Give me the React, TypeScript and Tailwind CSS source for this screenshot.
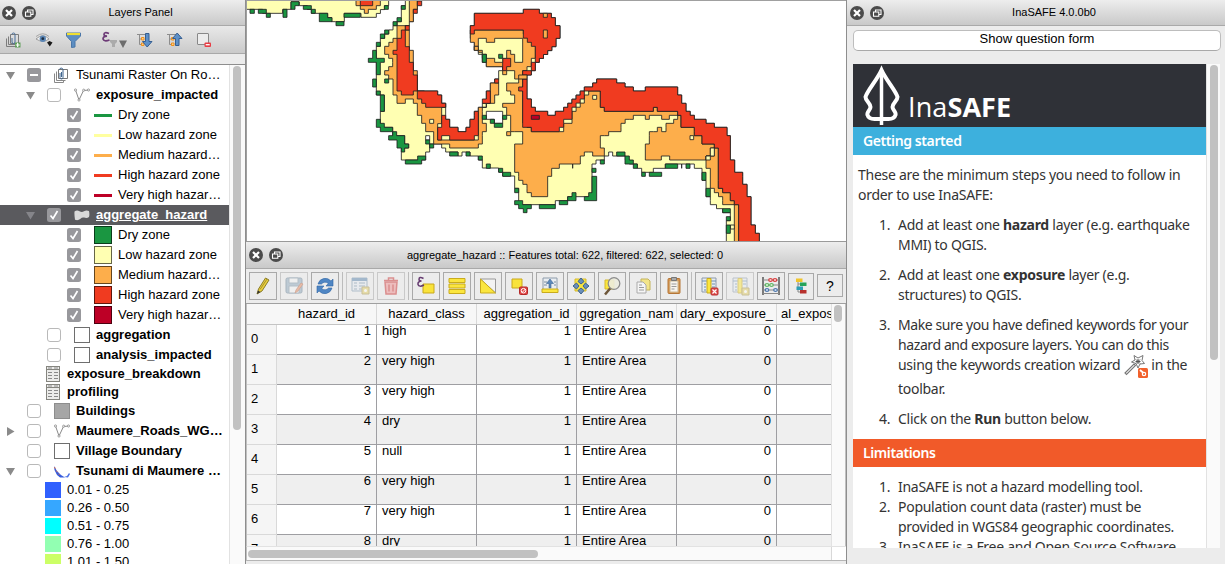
import React from "react";

const GREEN = "#1a9641";
const YELLOW = "#ffffb2";
const ORANGE = "#fdae4b";
const RED = "#f03b20";
const DARK = "#bd0026";

/* ---------- map ---------- */

const CELL = 12.15;

function stepped(src: string): string {
  const pts = src.trim().split(/\s+/).map((p) => p.split(",").map(Number));
  let d = "M" + pts[0][0] + " " + pts[0][1];
  for (let i = 0; i < pts.length; i++) {
    const [x0, y0] = pts[i];
    const [x1, y1] = pts[(i + 1) % pts.length];
    const n = Math.max(1, Math.round(Math.min(Math.abs(x1 - x0), Math.abs(y1 - y0)) / CELL));
    for (let k = 1; k <= n; k++) {
      d += "H" + (x0 + ((x1 - x0) * k) / n).toFixed(1) + "V" + (y0 + ((y1 - y0) * k) / n).toFixed(1);
    }
  }
  return d + "Z";
}

const LAND = [
  "0,-6 440,-6 428,6 428,17 391,52 345,52 345,40 295,40 295,65 269,65 245,40 208,40 184,17 160,6 135,6 135,28 110,28 110,40 65,40 50,28 0,28",
  "478,-6 514,-6 514,28 502,28 502,65 490,65 490,77 478,90 478,140 490,140 490,187 502,187 502,225 514,225 514,273 575,273 575,285 587,285 587,310 599,310 599,358 611,358 611,382 636,382 636,395 660,395 660,382 672,370 672,358 685,346 685,334 697,334 697,322 709,322 709,310 721,297 721,273 733,273 733,249 746,249 746,237 758,237 758,212 770,212 770,200 721,200 721,187 709,187 709,163 697,151 685,151 685,115 673,115 673,77 685,77 685,40 832,40 832,28 880,28 880,40 916,40 916,53 928,53 928,77 942,77 942,115 930,115 930,140 880,187 868,187 868,212 856,212 856,225 843,225 843,297 856,297 856,322 868,322 868,334 905,334 905,346 928,346 928,334 953,334 953,322 1015,261 1040,261 1040,249 1052,249 1052,237 1112,237 1112,249 1137,249 1137,261 1162,261 1162,273 1198,273 1198,261 1295,261 1295,285 1307,285 1307,310 1320,310 1320,334 1345,358 1380,358 1380,370 1405,370 1405,382 1443,382 1443,407 1453,407 1453,480 1466,480 1466,517 1490,529 1490,553 1503,553 1503,590 1515,590 1515,675 1528,675 1528,700 1540,700 1540,730 1441,730 1441,662 1453,662 1453,638 1430,626 1393,602 1393,590 1380,590 1380,541 1368,517 1368,505 1345,505 1345,492 1320,492 1307,505 1307,492 1258,492 1258,505 1222,517 1187,517 1187,505 1174,505 1174,492 1150,480 1138,468 1100,456 1088,468 1075,480 1050,492 1038,505 1038,590 990,590 965,602 928,614 830,614 818,602 818,565 806,565 806,528 794,528 770,516 758,504 733,504 709,492 709,480 697,468 684,468 672,456 648,456 648,468 636,456 599,456 599,444 587,444 587,432 563,432 551,432 551,456 539,456 539,480 466,480 466,444 488,444 488,432 476,407 452,407 440,395 440,382 415,382 403,370 403,334 415,334 415,285 403,285 391,260 391,139 403,115 441,77 466,53 466,17 478,17",
];

const ORANGES = [
  "330,-6 330,17 343,17 343,28 355,28 355,40 367,40 367,28 391,28 391,17 403,17 403,-6",
  "490,-6 514,-6 514,28 502,28 502,65 490,65",
  "453,77 490,77 478,90 514,273 599,322 575,420 697,407 697,322 721,310 733,310 733,249 758,249 758,285 746,297 746,310 733,310 709,334 709,370 721,370 721,395 709,407 709,432 697,432 697,444 611,444 611,432 563,432 563,395 539,395 539,370 527,370 527,346 514,346 514,310 502,310 502,297 478,297 478,310 453,310 453,285 441,285 441,237 428,237 428,225 416,225 416,212 428,212 428,200 440,187 440,175 428,175 428,163 416,163 416,139 441,115 453,102",
  "673,90 832,90 832,102 868,139 868,175 856,187 856,200 843,212 830,225 830,370 856,395 940,395 953,382 953,370 978,358 978,334 1015,297 1015,285 1028,273 1063,273 1063,322 1075,322 1075,334 1222,334 1222,322 1234,322 1234,334 1295,334 1295,358 1283,358 1283,370 1260,382 1260,395 1247,395 1247,382 1234,382 1234,395 1222,395 1210,407 1210,432 1198,432 1198,480 1246,480 1246,468 1271,468 1271,480 1380,480 1380,468 1393,468 1393,444 1405,444 1405,432 1368,432 1368,407 1345,395 1345,382 1305,382 1305,346 1270,346 1270,358 1247,358 1247,346 1210,346 1210,358 1198,358 1198,346 1162,346 1162,358 1150,358 1125,382 1125,395 1088,395 1088,407 1075,407 1063,420 1063,444 1075,444 1075,468 1040,468 1040,456 1028,456 1015,468 1003,480 1003,492 980,505 980,492 940,492 940,505 917,505 917,529 905,529 905,590 856,590 856,578 843,565 843,553 818,529 818,517 806,517 806,432 830,432 830,395 806,395 794,395 794,346 782,346 782,322 770,322 770,310 806,297 806,285 794,285 794,273 782,273 782,249 818,249 818,237 806,237 806,212 782,212 782,224 770,224 770,200 721,200 721,175 697,139 685,151 685,127 673,102",
  "1380,480 1380,505 1393,505 1393,565 1405,565 1405,578 1430,602 1430,614 1465,614 1465,730 1478,730 1478,614 1465,614 1465,602 1453,602 1453,578 1430,565 1417,541 1417,444 1405,444 1405,468 1393,468",
];

const REDS = [
  "343,-6 343,17 380,17 380,-6",
  "514,3 527,3 527,17 514,17",
  "502,28 514,28 514,40 502,40",
  "478,77 490,77 490,90 478,90",
  "466,90 478,90 478,140 490,140 490,187 502,187 502,225 514,225 514,273 502,273 502,285 466,285 466,273 453,273 453,163 441,163 441,151 453,151 453,115 466,102",
  "514,273 575,273 575,285 587,285 587,310 599,310 599,322 539,322 539,310 527,310 527,297 514,297",
  "587,346 599,346 599,358 611,358 611,382 636,382 636,395 660,395 660,382 672,382 672,358 685,346 685,334 697,334 697,407 685,407 685,420 611,420 611,407 587,407 587,420 575,420 575,382 587,382",
  "721,273 733,273 733,310 709,310 709,297 721,297",
  "746,237 758,237 758,249 746,249",
  "770,175 794,175 794,200 782,200 782,212 770,212",
  "685,40 832,40 832,28 880,28 880,40 916,40 916,53 928,53 928,77 942,77 942,115 930,115 930,140 880,187 868,187 868,212 856,212 856,225 830,225 830,212 843,212 856,200 856,187 868,175 868,139 856,127 832,102 832,90 685,90 685,102 673,102 673,77 685,77",
  "830,237 843,237 843,297 856,297 856,322 868,322 868,334 905,334 905,346 928,346 928,334 953,334 953,322 1015,261 1040,261 1040,249 1052,249 1052,237 1112,237 1112,249 1137,249 1137,261 1162,261 1162,273 1198,273 1198,261 1295,261 1295,285 1307,285 1307,310 1320,310 1320,334 1345,358 1380,358 1380,370 1405,370 1405,382 1443,382 1443,407 1453,407 1453,480 1466,480 1466,517 1490,529 1490,553 1503,553 1503,590 1515,590 1515,675 1528,675 1528,700 1540,700 1540,730 1478,730 1478,614 1465,614 1465,602 1453,602 1453,578 1430,565 1417,541 1417,444 1405,444 1405,432 1368,432 1368,407 1345,395 1345,382 1305,382 1305,346 1295,346 1295,334 1234,334 1234,322 1222,322 1222,334 1075,334 1075,322 1063,322 1063,273 1028,273 1015,285 1015,297 978,334 978,358 953,370 953,382 940,382 940,395 856,395 856,382 830,370 830,273 818,273 818,261 830,261",
];

const YELLOWS = [
  "697,115 721,115 721,127 746,127 746,115 830,115 830,187 806,187 806,163 794,163 794,151 782,151 782,175 770,175 770,187 746,187 746,175 721,175 721,163 709,163 709,151 697,151",
  "551,358 563,358 563,370 551,370",
  "1040,286 1052,286 1052,298 1040,298",
  "1332,407 1343,407 1343,419 1332,419",
  "1393,444 1405,444 1405,468 1393,468",
  "1380,468 1393,468 1393,480 1380,480",
  "1453,675 1465,675 1465,687 1453,687",
];

const EXTRA_ORANGE = [
  "892,40 904,40 904,52 892,52",
  "892,90 904,90 904,114 892,114",
  "782,395 794,395 794,407 782,407",
  "818,225 843,225 843,237 818,237",
  "685,139 697,139 697,151 685,151",
];

const HOLES = [
  "721,334 770,334 770,370 745,370 745,358 721,358",
  "539,407 551,407 551,420 539,420",
];

const GREENS = [
  "12,28 25,28 25,40 12,40",
  "37,28 61,28 61,40 37,40",
  "61,40 73,40 73,52 61,52",
  "111,28 123,28 123,52 111,52",
  "135,5 159,5 159,17 147,17 147,28 135,28",
  "172,17 196,17 196,28 172,28",
  "196,28 208,28 208,40 196,40",
  "220,40 245,40 245,53 258,53 258,65 220,65",
  "270,65 294,65 294,77 270,77",
  "294,40 343,40 343,52 294,52",
  "415,17 427,17 427,28 415,28",
  "466,17 478,17 478,28 466,28",
  "453,53 466,53 466,65 453,65",
  "441,65 453,65 453,77 441,77",
  "416,90 428,90 428,102 416,102",
  "403,102 416,102 416,115 403,115",
  "391,127 403,127 403,139 391,139",
  "380,151 391,151 391,175 415,175 415,187 403,187 403,224 391,224 391,187 367,187 367,175 380,175",
  "380,237 391,237 391,261 380,261",
  "416,237 428,237 428,249 416,249",
  "391,273 403,273 403,285 391,285",
  "403,285 415,285 415,334 403,334",
  "391,358 403,358 403,370 415,370 415,382 440,382 440,395 403,395 403,382 391,382",
  "440,395 452,395 452,407 476,407 476,432 488,432 488,444 476,444 476,456 466,456 466,444 453,444 453,420 428,420 428,407 440,407",
  "478,480 515,480 515,468 539,468 539,480 527,480 527,492 478,492",
  "539,420 551,420 551,432 539,432",
  "551,432 563,432 563,444 551,444",
  "611,456 636,456 636,468 611,468",
  "660,456 672,456 672,468 660,468",
  "697,468 709,468 709,480 697,480",
  "721,492 733,492 733,505 721,505",
  "758,505 770,505 770,517 758,517",
  "770,517 794,517 794,529 770,529",
  "806,565 818,565 818,578 806,578",
  "806,602 830,602 830,614 856,614 856,626 843,626 843,638 832,638 832,626 818,626 818,614 806,614",
  "880,614 928,614 928,626 880,626",
  "940,602 965,602 965,590 978,590 978,578 990,578 990,602 965,602 965,614 940,614",
  "1038,529 1052,529 1052,602 1015,602 1015,590 1028,590 1028,578 1038,578",
  "1038,505 1050,505 1050,517 1038,517",
  "1063,480 1075,480 1075,492 1063,492",
  "1112,456 1137,456 1137,468 1150,468 1150,480 1162,480 1162,492 1137,492 1137,468 1112,468",
  "1162,492 1174,492 1174,505 1162,505",
  "1187,517 1198,517 1198,529 1187,529",
  "1210,517 1247,517 1247,529 1210,529",
  "1258,492 1295,492 1295,505 1258,505",
  "1320,492 1332,492 1332,505 1320,505",
  "1368,517 1380,517 1380,541 1368,541",
  "1380,565 1393,565 1393,590 1380,590",
  "1430,626 1453,626 1453,638 1430,638",
  "1441,650 1453,650 1453,662 1441,662",
  "1441,675 1453,675 1453,700 1441,700",
  "709,163 721,163 721,187 709,187",
  "758,163 770,163 770,175 758,175",
  "709,346 721,346 721,358 709,358",
  "770,346 782,346 782,358 770,358",
  "733,358 745,358 745,370 770,370 770,382 745,382 745,370 733,370",
];

function Shapes({ list, fill }: { list: string[]; fill: string }) {
  return (
    <g fill={fill}>
      {list.map((s, i) => (
        <path key={i} d={stepped(s)} />
      ))}
    </g>
  );
}

function HazardMap() {
  return (
    <svg className="-ml-px block" width="600" height="240" viewBox="0 3 1800 720">
      <g stroke="#222" strokeWidth="3" strokeOpacity="0.85">
        <Shapes list={LAND} fill={YELLOW} />
        <Shapes list={ORANGES} fill={ORANGE} />
        <Shapes list={REDS} fill={RED} />
        <Shapes list={YELLOWS} fill={YELLOW} />
        <Shapes list={EXTRA_ORANGE} fill={ORANGE} />
        <Shapes list={HOLES} fill="#fff" />
        <Shapes list={GREENS} fill={GREEN} />
        <Shapes list={["856,346 880,346 880,358 856,358"]} fill={DARK} />
      </g>
    </svg>
  );
}

/* ---------- shared chrome ---------- */

function TitleBar({ title, className }: { title: string; className: string }) {
  return (
    <div className={"flex shrink-0 items-center border-b border-[#a9a9a9] bg-linear-to-b from-[#ededed] to-[#c9c9c9] text-black " + className}>
      <svg width="36" height="16" viewBox="0 0 36 16" className="shrink-0">
        <circle cx="8" cy="8" r="7" fill="#4b4b4b" />
        <path d="M5 5l6 6M11 5l-6 6" stroke="#fff" strokeWidth="2.2" />
        <circle cx="28" cy="8" r="7" fill="#4b4b4b" />
        <path d="M26.5 7V5h5.5v4.500h-2M24.500 7h5.300v4.300h-5.300z" stroke="#fff" strokeWidth="1.100" fill="none" />
      </svg>
      <span className="min-w-0 flex-1 text-center text-[11px] whitespace-nowrap">{title}</span>
    </div>
  );
}

/* ---------- layers panel ---------- */

function Check({ state }: { state: "on" | "off" | "mixed" }) {
  return (
    <svg width="14" height="14" viewBox="0 0 14 14" className="shrink-0">
      {state === "off" ? (
        <rect x="0.5" y="0.5" width="13" height="13" rx="2.500" fill="#fff" stroke="#b9b9b9" />
      ) : (
        <rect width="14" height="14" rx="2.500" fill="#98989c" />
      )}
      {state === "on" && <path d="M3.500 7.500l2.500 3 4.500-7.500" fill="none" stroke="#fff" strokeWidth="1.700" />}
      {state === "mixed" && <path d="M3 7h8" stroke="#fff" strokeWidth="2" />}
    </svg>
  );
}

function Arrow({ open, dim }: { open: boolean; dim?: boolean }) {
  return (
    <svg width="9" height="9" viewBox="0 0 9 9" className="shrink-0">
      <path d={open ? "M0 1h9L4.500 8.500z" : "M1 0v9l7.500-4.500z"} fill={dim ? "#85858a" : "#8a8a8a"} />
    </svg>
  );
}

function GroupIcon() {
  return (
    <svg width="15" height="16" viewBox="0 0 15 16" className="shrink-0" fill="none">
      <path d="M4.500 2.500h9v9h-9z" stroke="#777" fill="#fff" />
      <path d="M2.500 4.500v9h9M.500 6.500v9h9v-2" stroke="#888" />
      <path d="M6 6v4.500a1.500 1.500 0 003 0V2.500a1.800 1.800 0 00-3.500 0M7.500 5v5" stroke="#3f658f" />
    </svg>
  );
}

function LineIcon() {
  return (
    <svg width="16" height="14" viewBox="0 0 16 14" className="shrink-0" fill="none" stroke="#8a8a8a">
      <path d="M1.500 2L5 12 9.500 2.500 15 2" />
      <circle cx="1.500" cy="2" r="1.100" fill="#fff" strokeWidth=".8" />
      <circle cx="5" cy="12" r="1.100" fill="#fff" strokeWidth=".8" />
      <circle cx="9.700" cy="2.200" r="1.100" fill="#fff" strokeWidth=".8" />
      <circle cx="14.500" cy="2" r="1.100" fill="#fff" strokeWidth=".8" />
    </svg>
  );
}

function PolyIcon() {
  return (
    <svg width="16" height="11" viewBox="0 0 16 11" className="shrink-0">
      <path d="M.500 1.500Q3-.300 5.500 1.300 8 2.500 10 1.200 12.500-.200 15 1q.8 3.500 0 6-2 1.500-5 .500Q8 7 6.500 8.800 4 11 1 9.800.200 5 .500 1.500z" fill="#d9d9d9" />
    </svg>
  );
}

function TableIcon() {
  return (
    <svg width="14" height="16" viewBox="0 0 14 16" className="shrink-0">
      <rect x=".5" y=".5" width="13" height="15" fill="#ececea" stroke="#85857f" />
      <path d="M.500 3.500h13" stroke="#85857f" />
      <path d="M2 2h4M8 2h4M2 6.500h4M8 6.500h4M2 9.500h4M8 9.500h4M2 12.500h4M8 12.500h4" stroke="#8a8a8a" />
    </svg>
  );
}

function RasterIcon() {
  return (
    <svg width="16" height="14" viewBox="0 0 16 14" className="shrink-0">
      <path d="M0 2l3 5 4 4 4 2.500H6L3 11 .500 6z" fill="#365cdd" />
      <path d="M.500 3l2 4 3 4" stroke="#d06a50" fill="none" strokeDasharray="2 2" />
      <path d="M10 13l3-1 2-3 1 1-2 3.500z" fill="#4a70e6" />
    </svg>
  );
}

const CATS: { name: string; line: string; box: string }[] = [
  { name: "Dry zone", line: "bg-[#1a9641]", box: "bg-[#1a9641]" },
  { name: "Low hazard zone", line: "bg-[#ffffa0]", box: "bg-[#ffffb2]" },
  { name: "Medium hazard…", line: "bg-[#fdae4b]", box: "bg-[#fdae4b]" },
  { name: "High hazard zone", line: "bg-[#f03b20]", box: "bg-[#f03b20]" },
  { name: "Very high hazar…", line: "bg-[#bd0026]", box: "bg-[#bd0026]" },
];

const RAMP: { name: string; box: string }[] = [
  { name: "0.01 - 0.25", box: "bg-[#3060fe]" },
  { name: "0.26 - 0.50", box: "bg-[#36a7ff]" },
  { name: "0.51 - 0.75", box: "bg-[#00ffff]" },
  { name: "0.76 - 1.00", box: "bg-[#92ffb2]" },
  { name: "1.01 - 1.50", box: "bg-[#ccff66]" },
];

function Row({ children, className }: { children: React.ReactNode; className: string }) {
  return <div className={"flex shrink-0 items-center whitespace-nowrap " + className}>{children}</div>;
}

function LeftToolbar() {
  return (
    <div className="flex h-[28px] shrink-0 items-center border-b border-[#a9a9a9] bg-linear-to-b from-[#e9e9e9] to-[#cacaca] pl-[6px]">
      <svg width="15" height="16" viewBox="0 0 15 16" fill="none">
        <path d="M4.500 2.500h8v9h-8zM2.500 4.500v8h9M.500 6.500v8h9" stroke="#7d7d7d" />
        <path d="M6 6v4a1.500 1.500 0 003 0V2.500a1.500 1.500 0 00-3 0" stroke="#496f9a" />
        <path d="M9 10.500h5.500v5H9z" fill="#5f9f58" />
        <path d="M11.700 11v4M9.700 13h4" stroke="#fff" strokeWidth="1.200" />
      </svg>
      <svg className="ml-[14px]" width="18" height="16" viewBox="0 0 18 16">
        <path d="M1 7Q8 .500 14 7 8 11.500 1 7z" fill="#f4f4f4" stroke="#8b8b8b" strokeWidth=".8" />
        <path d="M1 4.500Q8-1 14 4.500" stroke="#a5a5a5" fill="none" />
        <circle cx="7.800" cy="6.700" r="3.200" fill="#5b86b5" />
        <circle cx="7.800" cy="6.700" r="1.400" fill="#1c2c40" />
        <path d="M12 10.500l2.500-1.500 3 1.500-2.700 4z" fill="#1a1a1a" />
      </svg>
      <svg className="ml-[13px]" width="15" height="16" viewBox="0 0 15 16">
        <path d="M.500 1h14v3L9 9.500V15l-3.500.500v-6L.500 4z" fill="#5d8ec2" stroke="#4a76a8" />
        <path d="M1 2h13" stroke="#f0df31" strokeWidth="2.200" />
      </svg>
      <svg className="ml-[21px]" width="25" height="17" viewBox="0 0 25 17">
        <path d="M7 2.500Q2 .500 2 3.500q0 1.500 3 1.700Q1 5.500 1 8 2 11 7.500 9" fill="none" stroke="#6d3b77" strokeWidth="1.700" />
        <path d="M8 9h7v2l-2 2v3h-3v-3l-2-2z" fill="#ababab" />
        <path d="M17 9.500h8L21 17z" fill="#6d6d6d" />
      </svg>
      <svg className="ml-[10px]" width="16" height="16" viewBox="0 0 16 16">
        <path d="M0 2.500h9M2.500 2.500v10M2.500 7h3M2.500 12.500h3" stroke="#8d8d8d" fill="none" />
        <path d="M4.500 5.500h2.500v2.500H4.500zM4.500 11h2.500v2.500H4.500z" fill="#fbd08a" stroke="#f0901c" />
        <path d="M8.500 1.500h3.500v8h3L10.200 15 5.500 9.500h3z" fill="#5d90c8" stroke="#365f92" />
      </svg>
      <svg className="ml-[14px]" width="16" height="16" viewBox="0 0 16 16">
        <path d="M0 2.500h9M2.500 2.500v10M2.500 7h3M2.500 12.500h3" stroke="#8d8d8d" fill="none" />
        <path d="M4.500 5.500h2.500v2.500H4.500zM4.500 11h2.500v2.500H4.500z" fill="#fbd08a" stroke="#f0901c" />
        <path d="M8.500 13.500h3.500v-7h3L10.200 1 5.500 6.500h3z" fill="#5d90c8" stroke="#365f92" />
      </svg>
      <svg className="ml-[13px]" width="15" height="16" viewBox="0 0 15 16">
        <rect x="1.500" y="1.500" width="11" height="11" rx=".5" fill="#ececec" stroke="#888" />
        <rect x="8.500" y="10.500" width="6.500" height="4.500" rx="1" fill="#e83c44" />
        <path d="M9.700 12.700h4" stroke="#fff" strokeWidth="1.300" />
      </svg>
    </div>
  );
}

function LayersPanel() {
  return (
    <div className="flex w-[246px] shrink-0 flex-col overflow-hidden border-r border-[#8e8e8e] bg-[#ececec]">
      <TitleBar title="Layers Panel" className="h-[26px] pl-px pr-[1px]" />
      <LeftToolbar />
      <div className="h-[10px] shrink-0" />
      <div className="flex min-h-0 flex-1 border-t border-[#8e8e8e] bg-white">
        <div className="flex min-w-0 flex-1 flex-col overflow-hidden text-[13px] text-black">
          <Row className="h-5 pl-[6px]">
            <Arrow open />
            <span className="w-3" />
            <Check state="mixed" />
            <span className="w-[13px]" />
            <GroupIcon />
            <span className="ml-[7px]">Tsunami Raster On Ro…</span>
          </Row>
          <Row className="h-5 pl-[26px]">
            <Arrow open />
            <span className="w-3" />
            <Check state="off" />
            <span className="w-[13px]" />
            <LineIcon />
            <span className="ml-[6px] font-bold">exposure_impacted</span>
          </Row>
          {CATS.map((c) => (
            <Row key={c.name} className="h-5 pl-[67px]">
              <Check state="on" />
              <span className={"mt-px ml-[13px] h-[3px] w-[18px] " + c.line} />
              <span className="ml-[6px]">{c.name}</span>
            </Row>
          ))}
          <Row className="h-5 bg-[#5a5a5e] pl-[26px] text-white">
            <Arrow open dim />
            <span className="w-3" />
            <Check state="on" />
            <span className="w-[13px]" />
            <PolyIcon />
            <span className="ml-[6px] font-bold underline">aggregate_hazard</span>
          </Row>
          {CATS.map((c) => (
            <Row key={c.name} className="h-5 pl-[67px]">
              <Check state="on" />
              <span className={"ml-[13px] h-[18px] w-[18px] border border-black/60 " + c.box} />
              <span className="ml-[6px]">{c.name}</span>
            </Row>
          ))}
          {["aggregation", "analysis_impacted"].map((n) => (
            <Row key={n} className="h-5 pl-[47px]">
              <Check state="off" />
              <span className="ml-[13px] h-4 w-4 border border-[#6e6e6e]" />
              <span className="ml-[6px] font-bold">{n}</span>
            </Row>
          ))}
          {["exposure_breakdown", "profiling"].map((n) => (
            <Row key={n} className="h-[18px] pl-[46px]">
              <TableIcon />
              <span className="ml-[7px] font-bold">{n}</span>
            </Row>
          ))}
          <Row className="h-5 pl-[27px]">
            <Check state="off" />
            <span className="ml-[13px] h-4 w-4 border border-[#8d8d8d] bg-[#a6a6a6]" />
            <span className="ml-[6px] font-bold">Buildings</span>
          </Row>
          <Row className="h-5 pl-[6px]">
            <Arrow open={false} />
            <span className="w-3" />
            <Check state="off" />
            <span className="w-[13px]" />
            <LineIcon />
            <span className="ml-[6px] font-bold">Maumere_Roads_WG…</span>
          </Row>
          <Row className="h-5 pl-[27px]">
            <Check state="off" />
            <span className="ml-[13px] h-4 w-4 border border-[#6e6e6e]" />
            <span className="ml-[6px] font-bold">Village Boundary</span>
          </Row>
          <Row className="h-5 pl-[6px]">
            <Arrow open />
            <span className="w-3" />
            <Check state="off" />
            <span className="w-[13px]" />
            <RasterIcon />
            <span className="ml-[6px] font-bold">Tsunami di Maumere …</span>
          </Row>
          {RAMP.map((r) => (
            <Row key={r.name} className="h-[18px] pl-[45px]">
              <span className={"h-4 w-4 " + r.box} />
              <span className="ml-[6px]">{r.name}</span>
            </Row>
          ))}
        </div>
        <div className="w-[16px] shrink-0 border-l border-[#e2e2e2] bg-[#fafafa] pt-px pl-[3px]">
          <div className="h-[364px] w-2 rounded-full bg-[#c1c1c1]" />
        </div>
      </div>
    </div>
  );
}

/* ---------- attribute table ---------- */

function Btn({ children, dim, className }: { children: React.ReactNode; dim?: boolean; className?: string }) {
  return (
    <div className={"flex shrink-0 items-center justify-center border " + (dim ? "border-[#c9c9c9] " : "border-[#a9a9a9] ") + (className ?? "h-7 w-7")}>
      <svg width="20" height="20" viewBox="0 0 20 20" fill="none" opacity={dim ? 0.5 : 1}>
        {children}
      </svg>
    </div>
  );
}

function Sep() {
  return <div className="h-7 w-px shrink-0 bg-[#bcbcbc]" />;
}

const SHEET = "M3 2h14v14H3z";

function TableToolbar() {
  return (
    <div className="flex h-[35px] shrink-0 items-center gap-[3px] border-b border-[#a0a0a0] bg-[#ececec] pl-[3px]">
      <Btn>
        <path d="M4 18l1.500-5L12.500 2l3.500 2L9 15z" fill="#e9cf3e" stroke="#8b7d2a" />
        <path d="M7 13.500L14 3" stroke="#a8932c" />
        <path d="M4 18l1-3.500 2.500 1.500z" fill="#333" />
      </Btn>
      <Btn dim>
        <rect x="2" y="2" width="16" height="15" rx="1.500" fill="#8fa9bd" stroke="#667f93" />
        <path d="M5 2h9v5H5zM5 10h10v7H5z" fill="#f3f3f3" stroke="#7e93a3" />
        <path d="M11 17l1-3 5-7 2 1-5 7z" fill="#e88b63" stroke="#b05c3a" strokeWidth=".7" />
      </Btn>
      <Btn>
        <path d="M3 8a7.500 7.500 0 0113-3l2-2v7h-7l2.300-2.500A4.500 4.500 0 006.500 8z" fill="#4f86c4" stroke="#3167a5" strokeWidth=".6" />
        <path d="M17 12a7.500 7.500 0 01-13 3l-2 2v-7h7l-2.300 2.500A4.500 4.500 0 0013.500 12z" fill="#4f86c4" stroke="#3167a5" strokeWidth=".6" />
      </Btn>
      <Sep />
      <Btn dim>
        <path d="M2 2h15v13H2z" fill="#e4eaf0" stroke="#7993ab" />
        <path d="M2 3.500h15" stroke="#5d86ad" strokeWidth="3" />
        <path d="M4 7h3M9 7h6M4 10h3M9 10h6M4 13h3M9 13h3" stroke="#718ba4" />
        <path d="M12 11h7v7h-7z" fill="#e2cd66" stroke="#a8954a" />
        <circle cx="15.500" cy="14.500" r="1.500" fill="#fff" />
      </Btn>
      <Btn dim>
        <path d="M4 6h12l-1 12H5z" fill="#ef8f8f" stroke="#cc3535" strokeWidth="1.500" />
        <path d="M3 4.500h14M7.500 4V2h5v2M8 8.500v7M12 8.500v7" stroke="#cc3535" strokeWidth="1.500" />
      </Btn>
      <Sep />
      <Btn>
        <path d="M7 8h11v9H7z" fill="#f9e33b" stroke="#c9a81a" />
        <path d="M7.500 2.500Q3 0 3 3.500 3 5 5.500 5 1.500 5.500 2 8.500 3 11.500 8 9" stroke="#653a70" strokeWidth="1.500" />
      </Btn>
      <Btn>
        <path d="M2 2.500h16v4H2zM2 8h16v4H2zM2 13.500h16v4H2z" fill="#fbe63e" stroke="#c9ab1c" />
      </Btn>
      <Btn>
        <path d="M2.500 3h15v14z" fill="#f3f3f3" stroke="#999" />
        <path d="M2.500 3v14h15z" fill="#fbe63e" stroke="#c9ab1c" />
      </Btn>
      <Btn>
        <path d="M3 3h10v9H3z" fill="#f9e33b" stroke="#c9a81a" />
        <rect x="10.500" y="11" width="8" height="7.500" rx="1" fill="#e04444" stroke="#b32929" />
        <circle cx="14.500" cy="14.700" r="2.300" stroke="#fff" />
        <path d="M13 16.500l3.500-3.500" stroke="#fff" />
      </Btn>
      <Btn>
        <path d={SHEET} fill="#e9edf1" stroke="#8e9cab" />
        <path d="M4 6h3M4 9h3M14 6h2M14 9h2" stroke="#7a8c9d" />
        <path d="M9 12V7.500H6.500L10 3l3.500 4.500H11V12z" fill="#5a88ba" stroke="#3c6593" strokeWidth=".6" />
        <path d="M2 13h16v3.500H2z" fill="#fbe63e" stroke="#c9ab1c" />
      </Btn>
      <Btn>
        <path d="M4 3h11v12H4z" fill="#fbe63e" stroke="#d5b92f" />
        <path d="M10 2l3 3.500-3 2.500-3-2.500zM10 18l3-3.500-3-2.500-3 2.500zM2 10l3.500-3L8 10l-2.500 3zM18 10l-3.500-3L12 10l2.500 3z" fill="#6a8fba" stroke="#3d6390" />
      </Btn>
      <Btn>
        <path d="M3 4h9v9H3z" fill="#fbe63e" stroke="#d5b92f" />
        <path d="M8.500 12L3 18.500" stroke="#6d5639" strokeWidth="2.500" />
        <circle cx="12" cy="7.500" r="5.800" fill="#ececdf" fillOpacity=".9" stroke="#8d8d8d" strokeWidth="1.300" />
      </Btn>
      <Btn>
        <path d="M8 3h7l2 2v9H8z" fill="#f3e58a" stroke="#c3b35b" />
        <path d="M4 6h6l3 3v8H4z" fill="#f5f5f5" stroke="#aaa" />
        <path d="M6 9h3M6 11.500h5M6 14h5" stroke="#9a9a9a" />
      </Btn>
      <Btn>
        <rect x="4" y="2.500" width="12" height="15" rx="1" fill="#d69651" stroke="#b57637" />
        <path d="M6 5h8v11H6z" fill="#f7f4ee" stroke="#ccb793" />
        <path d="M7.500 1.500h5v3h-5z" fill="#aaa" stroke="#777" />
        <path d="M7.500 8h5M7.500 10.500h5M7.500 13h3" stroke="#9a9a9a" />
      </Btn>
      <Sep />
      <Btn>
        <path d={SHEET} fill="#e6ecf2" stroke="#8d9aab" />
        <path d="M3 5h14M5 8h2M5 11h2M13 8h3M13 11h3M5 14h2" stroke="#6c8fb2" />
        <path d="M8 2.500h4V17H8z" fill="#fbe63e" stroke="#c9ab1c" />
        <rect x="12" y="12" width="7" height="7" rx="1" fill="#df4b4b" stroke="#b93333" />
        <path d="M13.500 13.500l4 4M17.500 13.500l-4 4" stroke="#fff" strokeWidth="1.200" />
      </Btn>
      <Btn dim>
        <path d={SHEET} fill="#e6ecf2" stroke="#8d9aab" />
        <path d="M3 5h14M5 8h2M5 11h2M13 8h3M5 14h2" stroke="#6c8fb2" />
        <path d="M8 2.500h4V17H8z" fill="#fbe63e" stroke="#c9ab1c" />
        <path d="M12 12h7v7h-7z" fill="#e2cd66" stroke="#a8954a" />
        <circle cx="15.500" cy="15.500" r="1.500" fill="#fff" />
      </Btn>
      <Btn>
        <path d="M2 1v18M18 1v18" stroke="#555" strokeWidth="1.500" />
        <path d="M2 4h16M2 9h16M2 14h16M2 17.500h16" stroke="#888" />
        <g fill="#fff" strokeWidth="1.200">
          <ellipse cx="9.500" cy="4" rx="1.800" ry="1.400" stroke="#d63e3e" />
          <ellipse cx="14" cy="4" rx="1.800" ry="1.400" stroke="#d63e3e" />
          <ellipse cx="6" cy="9" rx="1.800" ry="1.400" stroke="#5fb562" />
          <ellipse cx="10.500" cy="9" rx="1.800" ry="1.400" stroke="#5fb562" />
          <ellipse cx="6" cy="14" rx="1.800" ry="1.400" stroke="#4a76ad" />
          <ellipse cx="14.500" cy="14" rx="1.800" ry="1.400" stroke="#4a76ad" />
        </g>
      </Btn>
      <Btn className="h-[27px] w-[26px]">
        <path d="M7 5v11h4M7 8h4M9 12h3" stroke="#888" />
        <path d="M5 2.500h6.500V6H5z" fill="#f0c52c" />
        <path d="M9 6.500h6.500V10H9z" fill="#25a35a" />
        <path d="M5.500 10.500H12V14H5.500z" fill="#2c9fb5" />
        <path d="M9 14h6.500v3.500H9z" fill="#b7312d" />
      </Btn>
      <div className="mt-[-1px] flex h-[23px] w-[26px] shrink-0 items-center justify-center border border-[#a9a9a9] text-[14px] leading-none text-black">?</div>
    </div>
  );
}

const COLS = ["hazard_id", "hazard_class", "aggregation_id", "ggregation_nam", "dary_exposure_"];
const CLASSES = ["high", "very high", "very high", "dry", "null", "very high", "very high", "dry"];

function AttributeTable() {
  return (
    <div className="flex min-h-0 flex-1 flex-col">
      <TitleBar title="aggregate_hazard :: Features total: 622, filtered: 622, selected: 0" className="h-[28px] border-t border-t-[#9a9a9a] pl-[2px]" />
      <TableToolbar />
      <div className="flex min-h-0 flex-1 border-l border-[#c0c0c0] bg-white text-[13px] text-black">
        <div className="flex min-w-0 flex-1 flex-col overflow-hidden">
          <div className="flex h-[21px] shrink-0 border-b border-[#c4c4c4] bg-[#f7f7f7]">
            <div className="w-[30px] shrink-0" />
            {COLS.map((c) => (
              <div key={c} className="flex w-[100px] shrink-0 items-center justify-center overflow-hidden border-r border-[#d9d9d9] whitespace-nowrap">
                {c}
              </div>
            ))}
            <div className="flex min-w-0 flex-1 items-center overflow-hidden pl-[4px] whitespace-nowrap">al_expos</div>
          </div>
          <div className="flex min-h-0 flex-1 flex-col overflow-hidden">
            {CLASSES.map((cls, i) => (
              <div key={i} className={"flex h-[30px] shrink-0 leading-[12px] " + (i % 2 ? "bg-[#efefef]" : "bg-white")}>
                <div className="flex w-[30px] shrink-0 items-center border-r border-b border-[#d9d9d9] bg-[#f5f5f5] pb-px pl-1">{i}</div>
                <div className="w-[100px] shrink-0 border-r border-b border-[#9e9ea2] pr-[5px] text-right">{i + 1}</div>
                <div className="w-[100px] shrink-0 border-r border-b border-[#9e9ea2] pl-[5px]">{cls}</div>
                <div className="w-[100px] shrink-0 border-r border-b border-[#9e9ea2] pr-[5px] text-right">1</div>
                <div className="w-[100px] shrink-0 border-r border-b border-[#9e9ea2] pl-[5px]">Entire Area</div>
                <div className="w-[100px] shrink-0 border-r border-b border-[#9e9ea2] pr-[5px] text-right">0</div>
                <div className="min-w-0 flex-1 border-b border-[#9e9ea2]" />
              </div>
            ))}
          </div>
        </div>
        <div className="w-[15px] shrink-0 border-r border-l border-[#e2e2e2] border-r-[#c0c0c0] bg-[#fafafa] pt-px pl-[2px]">
          <div className="h-[17px] w-2 rounded-full bg-[#c1c1c1]" />
        </div>
      </div>
      <div className="flex h-[15px] shrink-0 items-center border-t border-b border-l border-t-[#e2e2e2] border-b-[#b5b5b5] border-l-[#c0c0c0] bg-[#fafafa] pl-px">
        <div className="h-2 w-[290px] rounded-full bg-[#c1c1c1]" />
        <div className="ml-auto h-full w-[15px] border-l border-[#d8d8d8] bg-white" />
      </div>
      <div className="h-[3px] shrink-0 bg-[#ececec]" />
    </div>
  );
}

/* ---------- InaSAFE dock ---------- */

function Wand() {
  return (
    <svg width="24" height="24" viewBox="0 0 24 24" fill="none" className="mr-[3px] ml-[4px] -mt-px shrink-0">
      <path d="M1 19l9-9 1.500 1.500-9 9z" fill="#fff" stroke="#777" strokeWidth="1.100" />
      <path d="M10 1.500l4 2.500 5-2.500-1 5 2.500 3-4.500.500-2 4-2-4.500L7.500 8l3.500-2z" fill="#fff" stroke="#777" />
      <path d="M12 5.500l4 4M16 5.500l-4 4M14 5v5M11.500 7.500h5" stroke="#555" />
      <rect x="14" y="14" width="10" height="10" rx="1.500" fill="#f2612c" />
      <path d="M16 16l3.500 3" stroke="#fff" strokeWidth="1.800" />
      <circle cx="20" cy="20" r="1.700" stroke="#fff" strokeWidth="1.200" />
    </svg>
  );
}

function Item({ n, children, className }: { n: number; children: React.ReactNode; className?: string }) {
  return (
    <div className={"flex leading-5 whitespace-nowrap " + (className ?? "")}>
      <span className="w-[45px] shrink-0 pl-[26px]">{n}.</span>
      <div className="min-w-0">{children}</div>
    </div>
  );
}

function InaSafeDock() {
  return (
    <div className="flex min-w-0 flex-1 flex-col border-l border-[#8e8e8e] bg-[#ececec]">
      <TitleBar title="InaSAFE 4.0.0b0" className="h-[26px] pr-[2px] pl-[2px]" />
      <div className="mr-[4px] ml-[6px] mt-1 flex h-[21px] shrink-0 items-start justify-center rounded-[5px] border border-[#bdbdbd] border-b-[#a9a9a9] bg-white text-[13px] leading-[16px] text-black">
        Show question form
      </div>
      <div className="mt-[13px] mr-[5px] ml-[6px] flex h-[484px] shrink-0 bg-white">
        <div className="w-[353px] shrink-0 overflow-hidden font-['Noto_Sans','Open_Sans',sans-serif] text-[14px] tracking-[-0.28px] text-[#333]">
          <div className="flex h-[63px] bg-[#2f3137] pl-[9px] text-white">
            <svg width="40" height="63" viewBox="0 0 40 63" fill="none" stroke="#fff" strokeWidth="4">
              <path d="M19.500 6C15 16 5 27 3.500 33c0 4 5 6 5 10 0 3-4 5-3 8 1 3.500 4 4 7 4h14c3 0 6-.500 7-4 1-3-3-5-3-8 0-4 5-6 5-10C34 27 24 16 19.500 6z" />
              <path d="M19.500 6v55" strokeWidth="3.500" />
            </svg>
            <span className="mt-[24px] ml-[6px] font-['Open_Sans',sans-serif] text-[27px] leading-[38px] tracking-[0.1px]">
              Ina<b>SAFE</b>
            </span>
          </div>
          <div className="h-7 bg-[#3db0dd] pl-[10px] leading-7 font-semibold tracking-[-0.4px] text-white">Getting started</div>
          <div className="mt-[10px] ml-[5px] leading-5 whitespace-nowrap">
            <p>These are the minimum steps you need to follow in</p>
            <p>order to use InaSAFE:</p>
          </div>
          <div className="mt-[10px] flex flex-col gap-[10px]">
            <Item n={1}>
              <p>
                Add at least one <b>hazard</b> layer (e.g. earthquake
              </p>
              <p>MMI) to QGIS.</p>
            </Item>
            <Item n={2}>
              <p>
                Add at least one <b>exposure</b> layer (e.g.
              </p>
              <p>structures) to QGIS.</p>
            </Item>
            <Item n={3}>
              <p className="tracking-[-0.4px]">Make sure you have defined keywords for your</p>
              <p className="tracking-[-0.4px]">hazard and exposure layers. You can do this</p>
              <div className="flex h-6">
                <span>using the keywords creation wizard</span>
                <Wand />
                <span>in the</span>
              </div>
              <p>toolbar.</p>
            </Item>
            <Item n={4}>
              <p>
                Click on the <b>Run</b> button below.
              </p>
            </Item>
          </div>
          <div className="mt-[10px] h-7 bg-[#f15a29] pl-[10px] leading-7 font-semibold tracking-[-0.4px] text-white">Limitations</div>
          <div className="mt-[10px]">
            <Item n={1}>InaSAFE is not a hazard modelling tool.</Item>
            <Item n={2}>
              <p>Population count data (raster) must be</p>
              <p>provided in WGS84 geographic coordinates.</p>
            </Item>
            <Item n={3}>InaSAFE is a Free and Open Source Software</Item>
          </div>
        </div>
        <div className="flex-1 border-l border-[#e2e2e2] bg-[#fafafa] pt-px pl-[3px]">
          <div className="h-[295px] w-2 rounded-full bg-[#c1c1c1]" />
        </div>
      </div>
    </div>
  );
}

export default function App() {
  return (
    <div className="flex h-[564px] w-[1225px] overflow-hidden bg-[#ececec] font-['Liberation_Sans',Arial,sans-serif]">
      <LayersPanel />
      <div className="flex w-[600px] shrink-0 flex-col overflow-hidden">
        <div className="h-[241px] shrink-0 overflow-hidden border-t border-l border-[#a0a0a0] bg-white">
          <HazardMap />
        </div>
        <AttributeTable />
      </div>
      <InaSafeDock />
    </div>
  );
}
